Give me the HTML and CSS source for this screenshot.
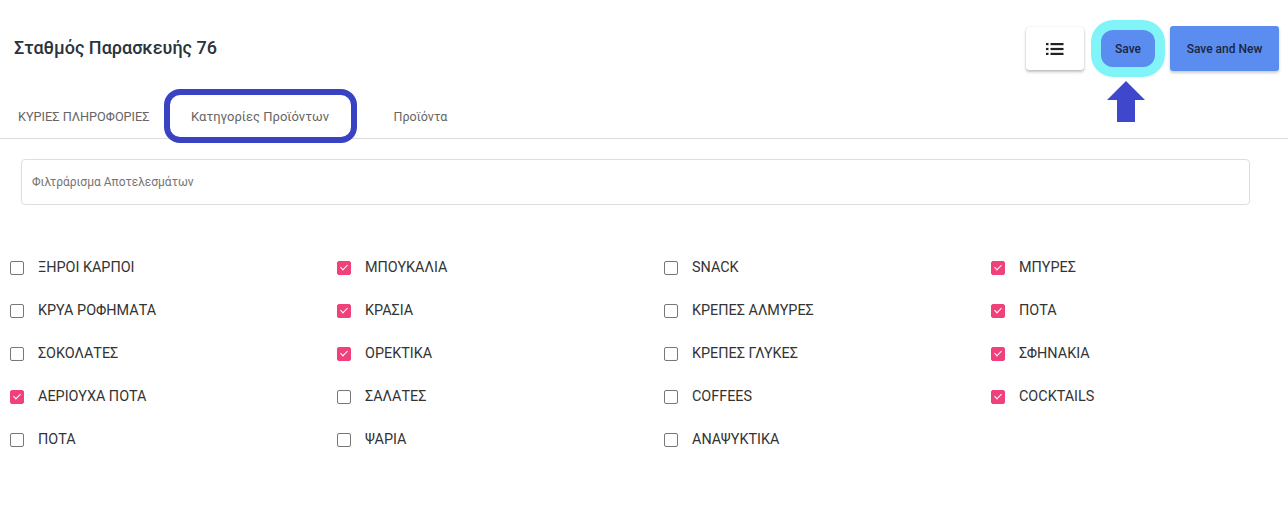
FILE: index.html
```html
<!DOCTYPE html>
<html lang="el">
<head>
<meta charset="utf-8">
<link rel="stylesheet" href="styles.css">
</head>
<body>
<div class="page">
  <header class="header">
    <h1 class="title">Σταθμός Παρασκευής 76</h1>
    <div class="actions">
      <button class="btn btn-list" aria-label="list">
        <svg width="18" height="12" viewBox="0 0 18 12"><rect x="0" y="0" width="2.5" height="2.2" fill="#222"/><rect x="4.5" y="0" width="13" height="2.2" fill="#222"/><rect x="0" y="4.9" width="2.5" height="2.2" fill="#222"/><rect x="4.5" y="4.9" width="13" height="2.2" fill="#222"/><rect x="0" y="9.8" width="2.5" height="2.2" fill="#222"/><rect x="4.5" y="9.8" width="13" height="2.2" fill="#222"/></svg>
      </button>
      <div class="save-wrap">
        <button class="btn btn-save">Save</button>
        <svg class="arrow" width="38" height="41" viewBox="0 0 38 41"><polygon points="19,0 38,19 28,19 28,41 10,41 10,19 0,19" fill="#3f48cc"/></svg>
      </div>
      <button class="btn btn-new">Save and New</button>
    </div>
  </header>

  <nav class="tabs">
    <div class="tab">ΚΥΡΙΕΣ ΠΛΗΡΟΦΟΡΙΕΣ</div>
    <div class="tab tab-active">Κατηγορίες Προϊόντων</div>
    <div class="tab tab-last">Προϊόντα</div>
  </nav>

  <div class="filter">
    <input class="filter-input" type="text" placeholder="Φιλτράρισμα Αποτελεσμάτων">
  </div>

  <div class="grid">
    <label class="item"><span class="box"></span>ΞΗΡΟΙ ΚΑΡΠΟΙ</label>
    <label class="item"><span class="box checked"></span>ΜΠΟΥΚΑΛΙΑ</label>
    <label class="item"><span class="box"></span>SNACK</label>
    <label class="item"><span class="box checked"></span>ΜΠΥΡΕΣ</label>

    <label class="item"><span class="box"></span>ΚΡΥΑ ΡΟΦΗΜΑΤΑ</label>
    <label class="item"><span class="box checked"></span>ΚΡΑΣΙΑ</label>
    <label class="item"><span class="box"></span>ΚΡΕΠΕΣ ΑΛΜΥΡΕΣ</label>
    <label class="item"><span class="box checked"></span>ΠΟΤΑ</label>

    <label class="item"><span class="box"></span>ΣΟΚΟΛΑΤΕΣ</label>
    <label class="item"><span class="box checked"></span>ΟΡΕΚΤΙΚΑ</label>
    <label class="item"><span class="box"></span>ΚΡΕΠΕΣ ΓΛΥΚΕΣ</label>
    <label class="item"><span class="box checked"></span>ΣΦΗΝΑΚΙΑ</label>

    <label class="item"><span class="box checked"></span>ΑΕΡΙΟΥΧΑ ΠΟΤΑ</label>
    <label class="item"><span class="box"></span>ΣΑΛΑΤΕΣ</label>
    <label class="item"><span class="box"></span>COFFEES</label>
    <label class="item"><span class="box checked"></span>COCKTAILS</label>

    <label class="item"><span class="box"></span>ΠΟΤΑ</label>
    <label class="item"><span class="box"></span>ΨΑΡΙΑ</label>
    <label class="item"><span class="box"></span>ΑΝΑΨΥΚΤΙΚΑ</label>
  </div>
</div>
</body>
</html>
```

FILE: styles.css
```css
* { box-sizing: border-box; }
html, body { margin: 0; padding: 0; background: #fff; }
body { font-family: Roboto, "Noto Sans", "Liberation Sans", sans-serif; color: #333; }

.page { width: 1288px; }

.header {
  display: flex;
  align-items: center;
  justify-content: space-between;
  height: 90px;
  padding: 4px 9px 0 14px;
}
.title {
  margin: 0;
  font-size: 18px;
  font-weight: 500;
  color: #2b333d;
  letter-spacing: 0;
}
.actions {
  display: flex;
  align-items: center;
  padding-top: 3px;
}
.btn {
  border: none;
  font-family: Roboto, "Liberation Sans", sans-serif;
  font-size: 12px;
  font-weight: 500;
  cursor: pointer;
}
.btn-list {
  width: 58px;
  height: 43px;
  background: #fff;
  border-radius: 3px;
  box-shadow: 0 2px 3px rgba(0,0,0,0.25), 0 0 1px rgba(0,0,0,0.2);
  display: flex;
  align-items: center;
  justify-content: center;
  margin-right: 17px;
}
.save-wrap {
  position: relative;
  margin-right: 15px;
}
.btn-save {
  display: block;
  width: 54px;
  height: 37px;
  background: #5a8def;
  color: #1c2540;
  border-radius: 12px;
  box-shadow: 0 0 0 10px #80f4f6;
}
.arrow {
  position: absolute;
  left: 6px;
  top: 51px;
}
.btn-new {
  width: 109px;
  height: 45px;
  background: #5a8def;
  color: #1c2540;
  border-radius: 3px;
  box-shadow: 0 2px 3px rgba(0,0,0,0.2);
}

.tabs {
  display: flex;
  align-items: center;
  height: 49px;
  padding-top: 4px;
  border-bottom: 1px solid #dcdcdc;
  padding-left: 18px;
}
.tab {
  font-size: 12.7px;
  color: #666;
  white-space: nowrap;
}
.tab-active {
  margin-left: 14px;
  width: 193px;
  height: 54px;
  margin-top: 0;
  border: 6px solid #3a42c4;
  border-radius: 16px;
  display: flex;
  align-items: center;
  justify-content: center;
  font-size: 13px;
  background: #fff;
  position: relative;
}
.tab-last {
  margin-left: 37px;
  font-size: 12.5px;
}

.filter {
  padding: 20px 38px 0 21px;
}
.filter-input {
  width: 100%;
  height: 46px;
  border: 1px solid #dedede;
  border-radius: 4px;
  padding: 0 10px;
  font-family: Roboto, "Liberation Sans", sans-serif;
  font-size: 12px;
  color: #333;
  outline: none;
}
.filter-input::placeholder { color: #757575; }

.grid {
  display: grid;
  grid-template-columns: repeat(4, 327px);
  grid-auto-rows: 43px;
  padding: 41px 0 0 10px;
}
.item {
  display: flex;
  align-items: center;
  font-size: 14.4px;
  color: #333;
}
.box {
  width: 14px;
  height: 14px;
  border: 1.5px solid #777;
  border-radius: 2px;
  margin-right: 14px;
  flex: none;
  position: relative;
}
.box.checked {
  background: #f0417a;
  border-color: #f0417a;
}
.box.checked::after {
  content: "";
  position: absolute;
  left: 3.5px;
  top: 1.5px;
  width: 3px;
  height: 6px;
  border: solid #fff;
  border-width: 0 1.2px 1.2px 0;
  transform: rotate(45deg);
}
```
